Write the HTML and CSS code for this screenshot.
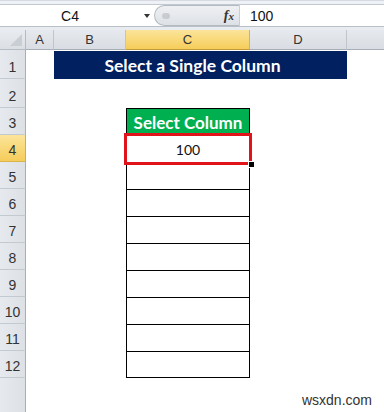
FILE: index.html
```html
<!DOCTYPE html>
<html>
<head>
<meta charset="utf-8">
<link rel="stylesheet" href="styles.css">
</head>
<body>
<div class="app">
  <div class="topstrip"></div>
  <div class="fbar">
    <div class="namebox"><span class="name">C4</span><span class="arrow"></span></div>
    <div class="pill"><span class="knob"></span><span class="fx">f<span class="x">x</span></span></div>
    <div class="formula">100</div>
  </div>
  <div class="gap"></div>
  <div class="sheet">
    <div class="corner"><svg width="12" height="12" viewBox="0 0 12 12"><polygon points="12,0 12,12 0,12" fill="#c9ced5"/></svg></div>
    <div class="ch">A</div>
    <div class="ch">B</div>
    <div class="ch sel">C</div>
    <div class="ch">D</div>
    <div class="ch last"></div>

    <div class="rh">1</div>
    <div class="cell"></div>
    <div class="banner">Select a Single Column</div>
    <div class="cell"></div>

    <div class="rh">2</div>
    <div class="cell"></div><div class="cell"></div><div class="cell"></div><div class="cell"></div><div class="cell"></div>

    <div class="rh">3</div>
    <div class="cell"></div><div class="cell"></div>
    <div class="thead">Select Column</div>
    <div class="cell"></div><div class="cell"></div>

    <div class="rh sel">4</div>
    <div class="cell"></div><div class="cell"></div>
    <div class="td active">100<div class="selbox"><span class="handle"></span></div></div>
    <div class="cell"></div><div class="cell"></div>

    <div class="rh">5</div><div class="cell"></div><div class="cell"></div><div class="td"></div><div class="cell"></div><div class="cell"></div>
    <div class="rh">6</div><div class="cell"></div><div class="cell"></div><div class="td"></div><div class="cell"></div><div class="cell"></div>
    <div class="rh">7</div><div class="cell"></div><div class="cell"></div><div class="td"></div><div class="cell"></div><div class="cell"></div>
    <div class="rh">8</div><div class="cell"></div><div class="cell"></div><div class="td"></div><div class="cell"></div><div class="cell"></div>
    <div class="rh">9</div><div class="cell"></div><div class="cell"></div><div class="td"></div><div class="cell"></div><div class="cell"></div>
    <div class="rh">10</div><div class="cell"></div><div class="cell"></div><div class="td"></div><div class="cell"></div><div class="cell"></div>
    <div class="rh">11</div><div class="cell"></div><div class="cell"></div><div class="td"></div><div class="cell"></div><div class="cell"></div>
    <div class="rh">12</div><div class="cell"></div><div class="cell"></div><div class="td last"></div><div class="cell"></div><div class="cell"></div>

    <div class="rh empty"></div>
    <div class="rest"><span class="wm">wsxdn.com</span></div>
  </div>
</div>
</body>
</html>
```
FILE: styles.css
```css
html, body { margin: 0; padding: 0; }
body { width: 384px; height: 412px; overflow: hidden; background: #fff; font-family: "Liberation Sans", Arial, sans-serif; }
.app { display: flex; flex-direction: column; height: 412px; }
.topstrip { height: 5px; background: #eef1f5; border-top: 1px solid #d7dbe1; border-bottom: 1px solid #c3c9d1; box-sizing: border-box; }
.fbar { height: 22px; display: flex; background: #fff; border-bottom: 1px solid #b9bfc7; box-sizing: border-box; }
.namebox { width: 154px; display: flex; align-items: center; position: relative; }
.name { width: 140px; text-align: center; font-size: 14px; color: #111; }
.arrow { width: 0; height: 0; border-left: 3px solid transparent; border-right: 3px solid transparent; border-top: 4px solid #333; margin-left: 4px; }
.pill { width: 86px; background: linear-gradient(#eef0f3, #dde1e6); border: 1px solid #b4bac2; border-radius: 11px 0 0 11px; border-right: 1px solid #c9ced5; box-sizing: border-box; display: flex; align-items: center; position: relative; }
.knob { width: 8px; height: 6px; border-radius: 4px; background: #c8ccd2; margin-left: 7px; }
.fx { margin-left: auto; margin-right: 5px; font-family: "Liberation Serif", serif; font-style: italic; font-weight: bold; font-size: 14px; color: #333; }
.fx .x { font-size: 11px; }
.formula { flex: 1; display: flex; align-items: center; padding-left: 10px; font-size: 14px; color: #111; }
.gap { height: 3px; background: #e8ebef; }
.sheet { flex: 1; display: grid; grid-template-columns: 26px 28px 72px 124px 97px 1fr; grid-template-rows: 20px 29px 29px repeat(10, 27px) 1fr; }
.corner { background: linear-gradient(#e9ecf0, #dbdfe4); border-right: 1px solid #b5bbc3; border-bottom: 1px solid #b5bbc3; box-sizing: border-box; display: flex; align-items: flex-end; justify-content: flex-end; padding: 0 3px 3px 0; }
.ch { background: linear-gradient(#e6e9ed, #d9dde3); border-right: 1px solid #bfc5cc; border-bottom: 1px solid #a8aeb6; box-sizing: border-box; display: flex; align-items: center; justify-content: center; font-size: 13px; color: #333; }
.ch.sel { background: linear-gradient(#fbe49a, #f6cd5a); border-right-color: #d9b44a; border-bottom-color: #c29a3a; }
.ch.last { border-right: none; }
.rh { background: linear-gradient(90deg, #e6e9ed, #dde1e6); border-right: 1px solid #a8aeb6; border-bottom: 1px solid #c3c9d0; box-sizing: border-box; display: flex; align-items: flex-end; justify-content: center; padding-bottom: 3px; font-size: 14px; color: #333; }
.rh.sel { background: linear-gradient(#fbe49a, #f6cd5a); border-bottom-color: #d9b44a; }
.rh.empty { border-bottom: none; }
.cell { background: #fff; }
.banner { grid-column: 3 / 6; background: #002060; color: #fff; font-family: Lato, "Open Sans", sans-serif; font-weight: bold; font-size: 17.5px; display: flex; align-items: center; justify-content: center; padding-right: 16px; margin-top: 1px; }
.thead { background: #00b050; color: #fff; font-family: Lato, "Open Sans", sans-serif; font-weight: bold; font-size: 17px; display: flex; align-items: center; justify-content: center; border: 1px solid #000; border-bottom: none; }
.td { border: 1px solid #000; border-bottom: none; background: #fff; display: flex; align-items: center; justify-content: center; font-family: Lato, "Open Sans", sans-serif; font-size: 14px; color: #111; }
.td.last { border-bottom: 1px solid #000; }
.active { position: relative; }
.selbox { position: absolute; left: -3px; top: -3px; right: -3px; bottom: -3px; border: 3px solid #e0131b; }
.handle { position: absolute; right: -6px; bottom: -6px; width: 5px; height: 5px; background: #000; border: 1px solid #fff; }
.rest { grid-column: 2 / 7; position: relative; }
.wm { position: absolute; right: 12px; bottom: 4px; font-size: 14px; color: #333; }
```
